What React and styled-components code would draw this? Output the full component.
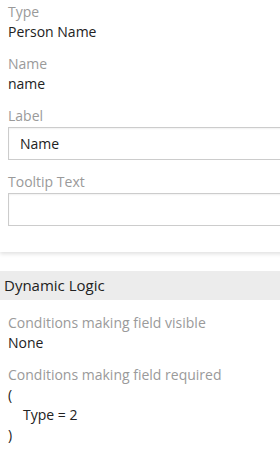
import React from "react"
import styled, { createGlobalStyle } from 'styled-components'

const GlobalStyle = createGlobalStyle`
  body {
    margin: 0;
    background: #fff;
    overflow: hidden;
    font-family: "Open Sans", "Liberation Sans", sans-serif;
    font-size: 14px;
    color: #222;
  }
`

const Page = styled.div`
  width: 320px;
`

const Panel = styled.div`
  background: #fff;
  padding: 2px 0 26px 8px;
  box-shadow: 0 2px 4px rgba(0, 0, 0, 0.12);
`

const Section = styled.div`
  padding: 13px 0 0 8px;
`

const Field = styled.div`
  margin-bottom: 12px;
  &:last-child {
    margin-bottom: 0;
  }
`

const Label = styled.div`
  color: #9a9a9a;
  line-height: 20px;
`

const Value = styled.div`
  color: #222;
  line-height: 20px;
`

const Input = styled.div`
  height: 31px;
  margin-top: 1px;
  border: 1px solid #ccc;
  box-shadow: inset 0 1px 2px rgba(0, 0, 0, 0.06);
  padding: 0 11px;
  line-height: 31px;
  color: #222;
`

const SectionHeader = styled.div`
  margin-top: 19px;
  background: #ececec;
  height: 29px;
  line-height: 29px;
  padding-left: 4px;
  font-size: 15px;
  color: #222;
`

const CodeLine = styled.div`
  line-height: 20px;
  padding-left: ${p => (p.indent ? 15 : 0)}px;
`

const App = () => {
  return (
    <Page>
      <GlobalStyle />
      <Panel>
        <Field>
          <Label>Type</Label>
          <Value>Person Name</Value>
        </Field>
        <Field>
          <Label>Name</Label>
          <Value>name</Value>
        </Field>
        <Field>
          <Label>Label</Label>
          <Input>Name</Input>
        </Field>
        <Field>
          <Label>Tooltip Text</Label>
          <Input />
        </Field>
      </Panel>
      <SectionHeader>Dynamic Logic</SectionHeader>
      <Section>
        <Field>
          <Label>Conditions making field visible</Label>
          <Value>None</Value>
        </Field>
        <Field>
          <Label>Conditions making field required</Label>
          <CodeLine>(</CodeLine>
          <CodeLine indent>Type = 2</CodeLine>
          <CodeLine>)</CodeLine>
        </Field>
      </Section>
    </Page>
  )
}

export default App
